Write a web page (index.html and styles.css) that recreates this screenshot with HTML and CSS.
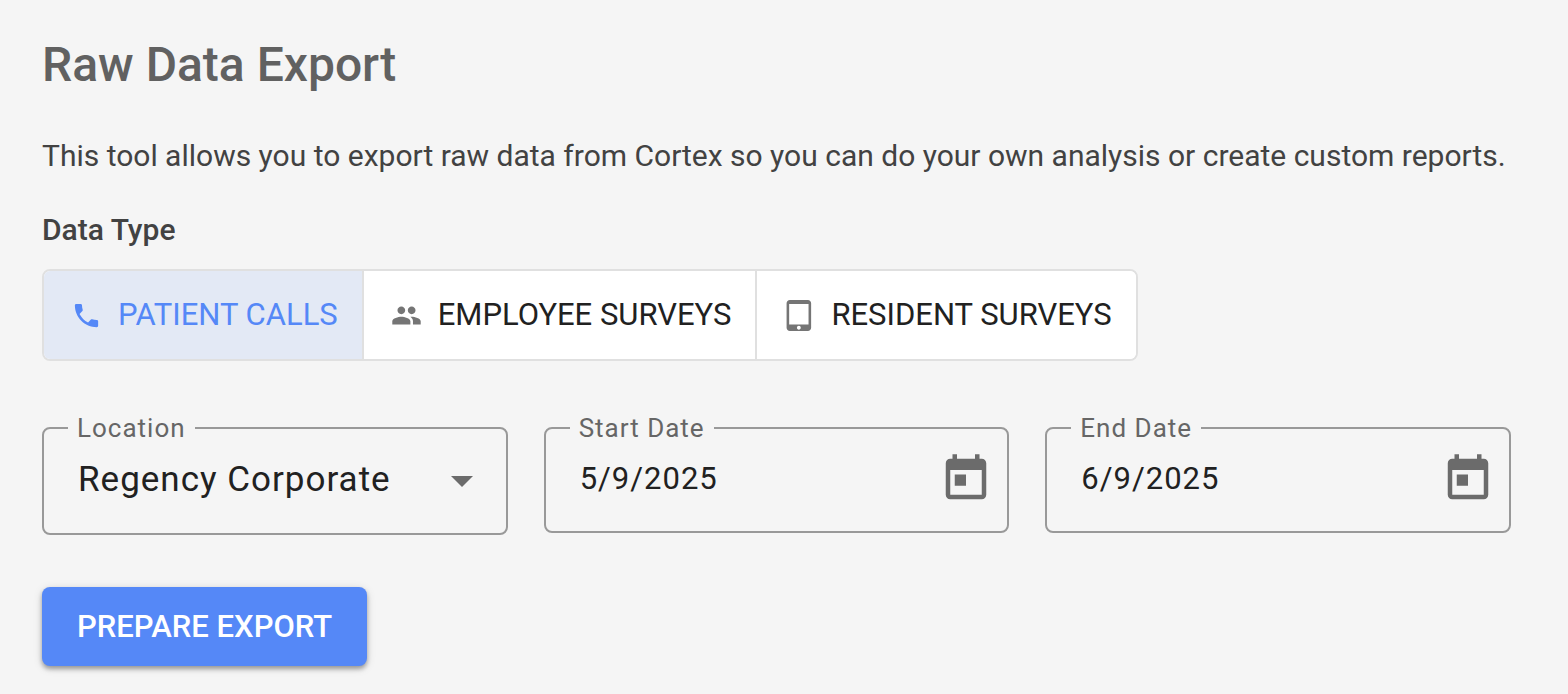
FILE: index.html
```html
<!DOCTYPE html>
<html lang="en">
<head>
<meta charset="utf-8">
<meta name="viewport" content="width=device-width, initial-scale=1">
<title>Raw Data Export</title>
<link rel="stylesheet" href="styles.css">
</head>
<body>
<main class="page">
  <h1 class="title">Raw Data Export</h1>
  <p class="intro">This tool allows you to export raw data from Cortex so you can do your own analysis or create custom reports.</p>
  <h2 class="section-title" id="data-type">Data Type</h2>
  <div class="toggle-group" role="group" aria-labelledby="data-type">
    <button type="button" class="toggle toggle-active" aria-pressed="true">
      <svg class="toggle-icon" viewBox="0 0 24 24" aria-hidden="true"><path d="M6.62 10.79c1.44 2.83 3.76 5.14 6.59 6.59l2.2-2.2c.27-.27.67-.36 1.02-.24 1.12.37 2.33.57 3.57.57.55 0 1 .45 1 1V20c0 .55-.45 1-1 1-9.39 0-17-7.61-17-17 0-.55.45-1 1-1h3.5c.55 0 1 .45 1 1 0 1.25.2 2.45.57 3.57.11.35.03.74-.25 1.02l-2.2 2.2z"/></svg>
      <span>PATIENT CALLS</span>
    </button>
    <button type="button" class="toggle" aria-pressed="false">
      <svg class="toggle-icon" viewBox="0 0 24 24" aria-hidden="true"><path d="M16 11c1.66 0 2.99-1.34 2.99-3S17.66 5 16 5s-3 1.34-3 3 1.34 3 3 3zm-8 0c1.66 0 2.99-1.34 2.99-3S9.66 5 8 5 5 6.34 5 8s1.34 3 3 3zm0 2c-2.33 0-7 1.17-7 3.5V19h14v-2.500c0-2.330-4.670-3.500-7-3.500zm8 0c-.29 0-.62.02-.97.05 1.160.84 1.970 1.970 1.970 3.450V19h6v-2.500c0-2.330-4.670-3.500-7-3.500z"/></svg>
      <span>EMPLOYEE SURVEYS</span>
    </button>
    <button type="button" class="toggle" aria-pressed="false">
      <svg class="toggle-icon" viewBox="0 0 24 24" aria-hidden="true"><path d="M18.500 0h-14C3.120 0 2 1.120 2 2.500v19C2 22.880 3.120 24 4.500 24h14c1.380 0 2.500-1.120 2.500-2.500v-19C21 1.120 19.880 0 18.500 0zm-7 23c-.83 0-1.500-.67-1.500-1.500s.67-1.500 1.500-1.500 1.500.67 1.500 1.500-.67 1.500-1.500 1.500zm7.500-4H4V3h15v16z"/></svg>
      <span>RESIDENT SURVEYS</span>
    </button>
  </div>
  <form class="export-form">
    <div class="fields">
      <fieldset class="field">
        <legend class="field-legend"><label for="location">Location</label></legend>
        <div class="field-row field-row-select">
          <select class="field-select" id="location"><option>Regency Corporate</option></select>
          <svg class="arrow" viewBox="0 0 24 16" aria-hidden="true"><path d="M1 4h22L12 15z"/></svg>
        </div>
      </fieldset>
      <fieldset class="field">
        <legend class="field-legend"><label for="start-date">Start Date</label></legend>
        <div class="field-row">
          <input class="field-input" id="start-date" type="text" value="5/9/2025">
          <button type="button" class="calendar-button" aria-label="Open start date calendar">
            <svg class="calendar-icon" viewBox="0 0 24 24" aria-hidden="true"><path d="M19 3h-1V1h-2v2H8V1H6v2H5c-1.110 0-1.990.9-1.990 2L3 19c0 1.100.89 2 2 2h14c1.100 0 2-.9 2-2V5c0-1.100-.9-2-2-2zm0 16H5V8h14v11zM7 10h5v5H7z"/></svg>
          </button>
        </div>
      </fieldset>
      <fieldset class="field">
        <legend class="field-legend"><label for="end-date">End Date</label></legend>
        <div class="field-row">
          <input class="field-input" id="end-date" type="text" value="6/9/2025">
          <button type="button" class="calendar-button" aria-label="Open end date calendar">
            <svg class="calendar-icon" viewBox="0 0 24 24" aria-hidden="true"><path d="M19 3h-1V1h-2v2H8V1H6v2H5c-1.110 0-1.990.9-1.990 2L3 19c0 1.100.89 2 2 2h14c1.100 0 2-.9 2-2V5c0-1.100-.9-2-2-2zm0 16H5V8h14v11zM7 10h5v5H7z"/></svg>
          </button>
        </div>
      </fieldset>
    </div>
    <button type="button" class="submit">PREPARE EXPORT</button>
  </form>
</main>
</body>
</html>
```

FILE: styles.css
```css
* {
  box-sizing: border-box;
}

body {
  margin: 0;
  background: #f5f5f5;
  color: #424242;
  font-family: Roboto, sans-serif;
}

button,
input,
select {
  margin: 0;
  font-family: inherit;
}

.page {
  padding: 33px 42px 24px;
}

.title {
  margin: 0 0 39px;
  color: #616161;
  font-size: 48px;
  font-weight: 500;
  line-height: 64px;
}

.intro {
  margin: 0 0 34px;
  font-size: 30px;
  line-height: 40px;
}

.section-title {
  margin: 0 0 19px;
  font-size: 30px;
  font-weight: 500;
  line-height: 40px;
}

.toggle-group {
  display: inline-flex;
  vertical-align: top;
  overflow: hidden;
  border: 2px solid #e0e0e0;
  border-radius: 8px;
  background: #fff;
}

.toggle {
  display: flex;
  align-items: center;
  gap: 16px;
  padding: 24px 24px 24px 27px;
  border: 0;
  background: #fff;
  color: #212121;
  font-size: 31px;
  line-height: 40px;
}

.toggle + .toggle {
  border-left: 2px solid #e0e0e0;
}

.toggle-active {
  background: #e3e9f5;
  color: #5588f7;
}

.toggle-icon {
  width: 31px;
  height: 31px;
  fill: #757575;
}

.toggle-active .toggle-icon {
  fill: #5588f7;
}

.export-form {
  margin-top: 51px;
}

.fields {
  display: grid;
  grid-template-columns: repeat(3, minmax(0, 1fr));
  align-items: start;
  gap: 36px;
  margin: 0 15px 52px 0;
}

.field {
  min-width: 0;
  margin: 0;
  padding: 0 0 18px;
  border: 2px solid #999;
  border-radius: 8px;
}

.field-legend {
  margin-left: 24px;
  padding: 0 9px;
  color: #666;
  font-size: 26px;
  line-height: 32px;
  letter-spacing: 1px;
}

.field-row {
  display: flex;
  align-items: center;
  height: 69px;
  padding: 0 14px 0 34px;
}

.field-row-select {
  height: 71px;
  padding-right: 32px;
}

.field-select,
.field-input {
  flex: 1;
  min-width: 0;
  height: 48px;
  padding: 0;
  border: 0;
  outline: 0;
  background: transparent;
  color: #212121;
  letter-spacing: 1px;
}

.field-select {
  appearance: none;
  font-size: 35px;
}

.field-input {
  font-size: 31px;
}

.arrow {
  width: 24px;
  height: 16px;
  fill: #6b6b6b;
}

.calendar-button {
  display: flex;
  padding: 0;
  border: 0;
  background: transparent;
}

.calendar-icon {
  width: 54px;
  height: 54px;
  fill: #6b6b6b;
}

.submit {
  display: block;
  padding: 20px 35px 19px;
  border: 0;
  border-radius: 8px;
  background: #5588f7;
  box-shadow: 0 3px 4px rgba(0, 0, 0, 0.3), 0 2px 10px rgba(0, 0, 0, 0.14);
  color: #fff;
  font-size: 31px;
  font-weight: 500;
  line-height: 40px;
}
```
